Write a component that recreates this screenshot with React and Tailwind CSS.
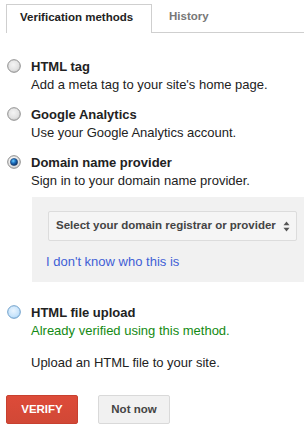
import React from "react";

function Radio({ kind }) {
  if (kind === "checked") {
    return (
      <svg width="14" height="14" viewBox="0 0 14 14" className="block">
        <defs>
          <radialGradient id="rc-out" cx="40%" cy="35%" r="70%">
            <stop offset="0%" stopColor="#ffffff" />
            <stop offset="100%" stopColor="#d4d4d4" />
          </radialGradient>
          <radialGradient id="rc-in" cx="40%" cy="35%" r="65%">
            <stop offset="0%" stopColor="#6fd0ff" />
            <stop offset="45%" stopColor="#1f74c4" />
            <stop offset="100%" stopColor="#0b2f66" />
          </radialGradient>
        </defs>
        <circle cx="7" cy="7" r="6.3" fill="url(#rc-out)" stroke="#8a8a8a" strokeWidth="1" />
        <circle cx="7" cy="7" r="3.6" fill="url(#rc-in)" stroke="#1b3f6e" strokeWidth="0.6" />
      </svg>
    );
  }
  if (kind === "hover") {
    return (
      <svg width="14" height="14" viewBox="0 0 14 14" className="block">
        <defs>
          <radialGradient id="rh" cx="45%" cy="40%" r="65%">
            <stop offset="0%" stopColor="#eaf5ff" />
            <stop offset="70%" stopColor="#c6e3fb" />
            <stop offset="100%" stopColor="#9ccbf0" />
          </radialGradient>
        </defs>
        <circle cx="7" cy="7" r="6.3" fill="url(#rh)" stroke="#6f9fc9" strokeWidth="1" />
      </svg>
    );
  }
  return (
    <svg width="14" height="14" viewBox="0 0 14 14" className="block">
      <defs>
        <radialGradient id="ru" cx="45%" cy="40%" r="65%">
          <stop offset="0%" stopColor="#f4f4f4" />
          <stop offset="65%" stopColor="#e2e2e2" />
          <stop offset="100%" stopColor="#c4c4c4" />
        </radialGradient>
      </defs>
      <circle cx="7" cy="7" r="6.3" fill="url(#ru)" stroke="#8e8e8e" strokeWidth="1" />
    </svg>
  );
}

function Option({ kind, title, children }) {
  return (
    <div className="flex">
      <div className="w-[31px] shrink-0 pl-[7px] pt-[1px]">
        <Radio kind={kind} />
      </div>
      <div className="flex-1 min-w-0">
        <div className="text-[13px] leading-[18px] font-bold text-[#222]">{title}</div>
        {children}
      </div>
    </div>
  );
}

export default function App() {
  return (
    <div
      className="w-[304px] h-[430px] bg-white overflow-hidden"
      style={{ fontFamily: '"Liberation Sans", Arial, sans-serif' }}
    >
      {/* Tabs */}
      <div className="flex pt-[4px]">
        <div className="w-[6px]" />
        <div className="w-[146px] h-[29px] border border-b-0 border-[#cfcfcf] flex items-center pl-[13px] pb-[3px] text-[11.5px] font-bold text-[#222]">
          Verification methods
        </div>
        <div className="flex-1 h-[29px] border-b border-[#cfcfcf] flex items-center pl-[17px] pb-[2px] text-[11.5px] font-bold text-[#777]">
          History
        </div>
      </div>

      <div className="pt-[25px] flex flex-col">
        <Option kind="unchecked" title="HTML tag">
          <div className="text-[13px] leading-[18px] text-[#222]">
            Add a meta tag to your site's home page.
          </div>
        </Option>
        <div className="h-[12px]" />
        <Option kind="unchecked" title="Google Analytics">
          <div className="text-[13px] leading-[18px] text-[#222]">
            Use your Google Analytics account.
          </div>
        </Option>
        <div className="h-[12px]" />
        <Option kind="checked" title="Domain name provider">
          <div className="text-[13px] leading-[18px] text-[#222]">
            Sign in to your domain name provider.
          </div>
        </Option>

        <div className="ml-[32px] mt-[7px] bg-[#f1f1f1] pt-[14px] pb-[11px] pl-[14px] pr-[7px]">
          <div className="ml-[2px] h-[30px] border border-[#dcdcdc] rounded-[2px] bg-[#f5f5f5] flex items-center pl-[7px] pr-[6px]">
            <span className="flex-1 text-[11.5px] font-bold text-[#444] whitespace-nowrap">
              Select your domain registrar or provider
            </span>
            <svg width="7" height="11" viewBox="0 0 7 11" className="block shrink-0">
              <path d="M3.5 0.5 L6.5 4.2 L0.5 4.2 Z" fill="#555" />
              <path d="M3.5 10.5 L6.5 6.8 L0.5 6.8 Z" fill="#555" />
            </svg>
          </div>
          <div className="mt-[12px] text-[13px] leading-[18px] text-[#3f5fd6]">
            I don't know who this is
          </div>
        </div>

        <div className="h-[22px]" />
        <Option kind="hover" title="HTML file upload">
          <div className="text-[13px] leading-[18px] text-[#138a13]">
            Already verified using this method.
          </div>
          <div className="mt-[14px] text-[13px] leading-[18px] text-[#222]">
            Upload an HTML file to your site.
          </div>
        </Option>

        <div className="flex gap-[20px] pl-[6px] mt-[23px]">
          <div className="w-[72px] h-[29px] rounded-[2px] border border-[#c8402f] bg-gradient-to-b from-[#dd4b39] to-[#d14836] flex items-center justify-center text-[11.5px] font-bold text-white">
            VERIFY
          </div>
          <div className="w-[72px] h-[29px] rounded-[2px] border border-[#d9d9d9] bg-[#f1f1f1] flex items-center justify-center text-[11.5px] font-bold text-[#444]">
            Not now
          </div>
        </div>
      </div>
    </div>
  );
}
